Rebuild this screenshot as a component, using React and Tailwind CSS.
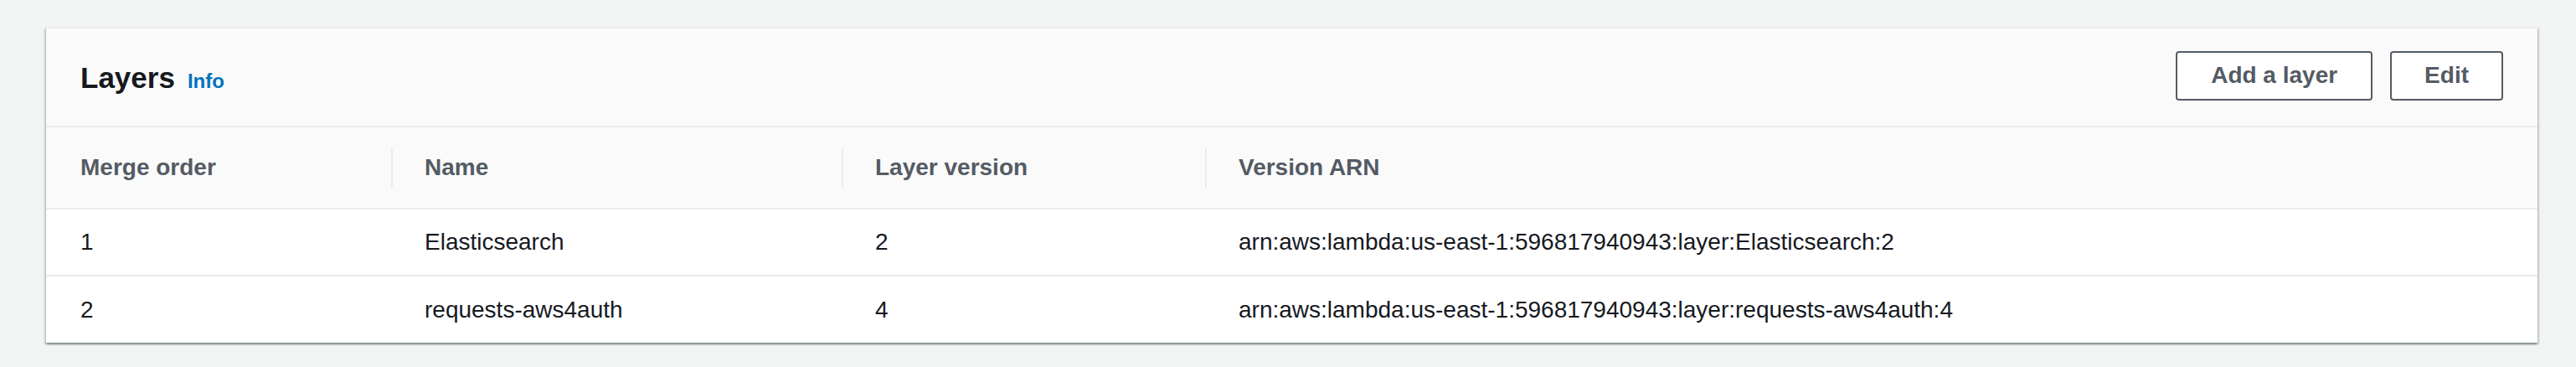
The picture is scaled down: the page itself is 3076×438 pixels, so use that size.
import React from 'react';

const layers = [
  { order: 1, name: 'Elasticsearch', version: 2, arn: 'arn:aws:lambda:us-east-1:596817940943:layer:Elasticsearch:2' },
  { order: 2, name: 'requests-aws4auth', version: 4, arn: 'arn:aws:lambda:us-east-1:596817940943:layer:requests-aws4auth:4' },
];

const columns = ['Merge order', 'Name', 'Layer version', 'Version ARN'];

const HeaderCell = ({ label, first }) => (
  <div className="flex items-center h-full">
    {!first && <div className="h-[47px] border-l-2 border-[#eaeded]"></div>}
    <span className={first ? 'pl-[41px]' : 'pl-[38px]'}>{label}</span>
  </div>
);

const App = () => {
  return (
    <div
      className="w-[3076px] h-[438px] bg-[#f2f3f3] pt-[32px] pl-[55px] pr-[46px]"
      style={{ fontFamily: '"Liberation Sans", Arial, sans-serif' }}
    >
      <div className="bg-white border-t-2 border-[#eaeded] shadow-[0_2px_2px_0_rgba(0,28,36,0.3),2px_2px_2px_0_rgba(0,28,36,0.15),-2px_2px_2px_0_rgba(0,28,36,0.15)]">
        <div className="h-[118px] bg-[#fafafa] border-b-2 border-[#eaeded] flex items-center justify-between pl-[41px] pr-[41px]">
          <div className="flex items-baseline">
            <h2 className="text-[35px] font-bold text-[#16191f] leading-none">Layers</h2>
            <span className="ml-[15px] text-[24px] font-bold text-[#0073bb] leading-none">Info</span>
          </div>
          <div className="flex items-center gap-[21px] mt-[-4px]">
            <button className="h-[59px] px-[40px] border-2 border-[#545b64] rounded-[4px] bg-white text-[28px] font-bold text-[#545b64]">
              Add a layer
            </button>
            <button className="h-[59px] px-[39px] border-2 border-[#545b64] rounded-[4px] bg-white text-[28px] font-bold text-[#545b64]">
              Edit
            </button>
          </div>
        </div>

        <div className="grid grid-cols-[412px_538px_434px_1fr] h-[98px] bg-[#fafafa] border-b-2 border-[#eaeded] text-[28px] font-bold text-[#545b64]">
          {columns.map((col, i) => (
            <HeaderCell key={col} label={col} first={i === 0} />
          ))}
        </div>

        {layers.map((layer, i) => (
          <div
            key={layer.order}
            className={`grid grid-cols-[412px_538px_434px_1fr] items-center text-[28px] text-[#16191f] ${
              i < layers.length - 1 ? 'h-[80px] border-b-2 border-[#eaeded]' : 'h-[79px]'
            }`}
          >
            <div className="pl-[41px]">{layer.order}</div>
            <div className="pl-[40px]">{layer.name}</div>
            <div className="pl-[40px]">{layer.version}</div>
            <div className="pl-[40px]">{layer.arn}</div>
          </div>
        ))}
      </div>
    </div>
  );
};

export default App;
